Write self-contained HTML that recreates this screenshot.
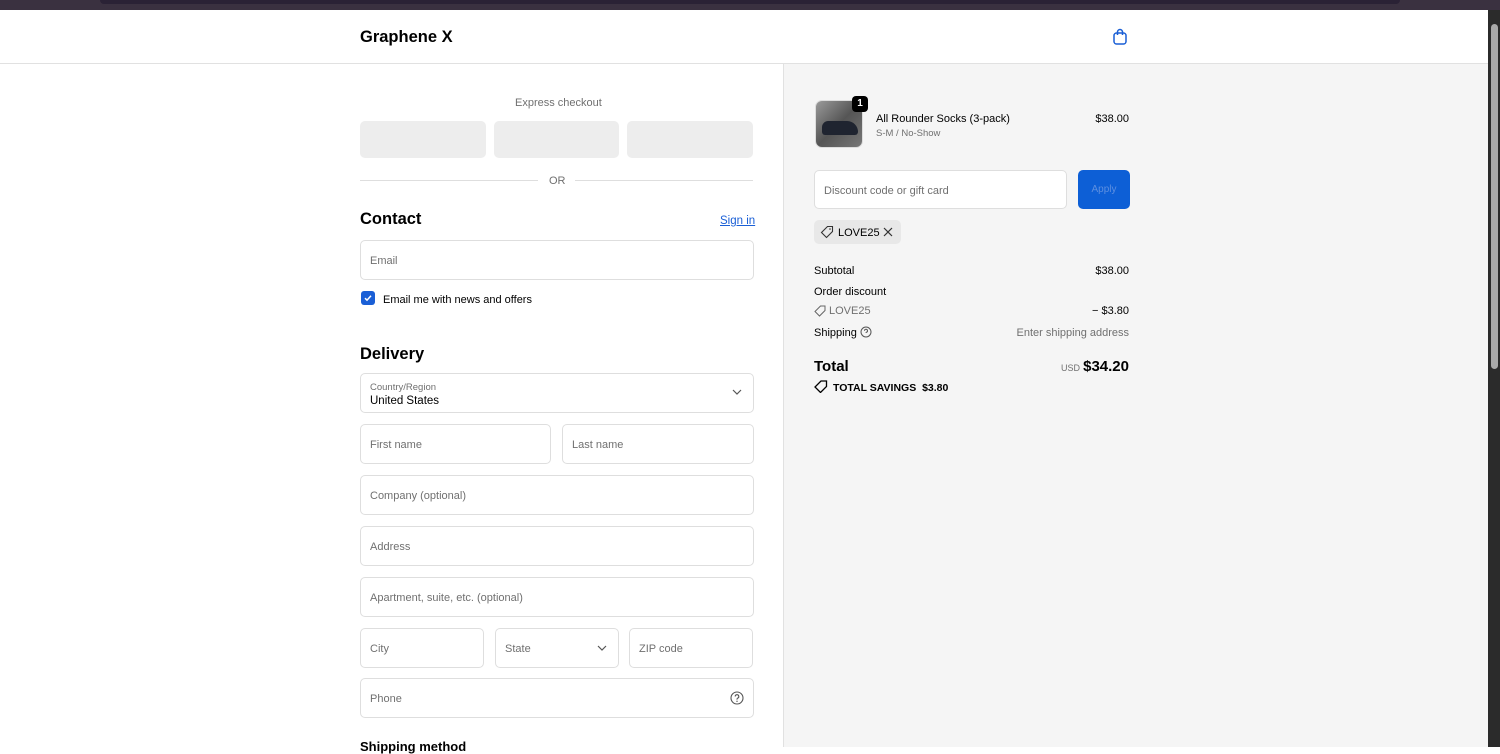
<!DOCTYPE html><html><head><style>
*{box-sizing:border-box;margin:0;padding:0}
body{width:1500px;height:747px;overflow:hidden;background:#fff;font-family:"Liberation Sans",sans-serif;color:#000;position:relative}
.a{position:absolute}
.in{position:absolute;border:1px solid #dedede;border-radius:5px;background:#fff;font-size:11px;color:#707070;padding-left:9px;padding-top:2px;display:flex;align-items:center}
.r{position:absolute;font-size:11px}
.rr{position:absolute;font-size:11px;right:371px;text-align:right;white-space:nowrap}
</style></head><body>
<div class="a" style="left:0;top:0;width:1500px;height:10px;background:#3a3140"></div>
<div class="a" style="left:100px;top:0;width:1300px;height:4px;background:#2a2235;border-radius:0 0 6px 6px"></div>
<div class="a" style="left:1488px;top:10px;width:12px;height:737px;background:#2b2b2b"></div>
<div class="a" style="left:1491px;top:24px;width:7px;height:345px;background:#a9a9a9;border-radius:4px"></div>
<div class="a" style="left:0;top:63px;width:1488px;height:1px;background:#e1e1e1"></div>
<div class="a" style="left:783px;top:64px;width:705px;height:683px;background:#f5f5f5;border-left:1px solid #e1e1e1"></div>
<div class="a" style="left:360px;top:28px;font-size:16.5px;font-weight:bold">Graphene X</div>
<svg class="a" style="left:1112px;top:28px" width="16" height="18" viewBox="0 0 16 18"><rect x="2" y="5" width="12" height="11" rx="2.5" fill="none" stroke="#1a5fd6" stroke-width="1.5"/><path d="M5.5 7V4a2.5 2.5 0 0 1 5 0v3" fill="none" stroke="#1a5fd6" stroke-width="1.5"/></svg>

<div class="r" style="left:515px;top:97px;color:#707070">Express checkout</div>
<div class="a" style="left:360px;top:121px;width:126px;height:37px;background:#ededed;border-radius:5px"></div>
<div class="a" style="left:494px;top:121px;width:125px;height:37px;background:#ededed;border-radius:5px"></div>
<div class="a" style="left:627px;top:121px;width:126px;height:37px;background:#ededed;border-radius:5px"></div>
<div class="a" style="left:360px;top:180px;width:178px;height:1px;background:#dedede"></div>
<div class="a" style="left:575px;top:180px;width:178px;height:1px;background:#dedede"></div>
<div class="r" style="left:549px;top:175px;color:#707070">OR</div>

<div class="a" style="left:360px;top:210px;font-size:16.5px;font-weight:bold">Contact</div>
<div class="r" style="left:720px;top:215px;color:#1a5fd6;text-decoration:underline;font-size:11.5px">Sign in</div>
<div class="in" style="left:360px;top:240px;width:394px;height:40px">Email</div>
<div class="a" style="left:361px;top:291px;width:14px;height:14px;background:#1a5fd6;border-radius:3px"></div>
<svg class="a" style="left:361px;top:291px" width="14" height="14"><path d="M4 7.2l2 2 4-4.4" fill="none" stroke="#fff" stroke-width="1.5"/></svg>
<div class="r" style="left:383px;top:294px;color:#000">Email me with news and offers</div>

<div class="a" style="left:360px;top:345px;font-size:16.5px;font-weight:bold">Delivery</div>
<div class="in" style="left:360px;top:373px;width:394px;height:40px;display:block;padding-top:8px"><div style="font-size:9.5px">Country/Region</div><div style="color:#000;font-size:11.5px;margin-top:2px">United States</div></div>
<svg class="a" style="left:732px;top:389px" width="10" height="7"><path d="M1 1l4 4 4-4" fill="none" stroke="#555" stroke-width="1.2"/></svg>
<div class="in" style="left:360px;top:424px;width:191px;height:40px">First name</div>
<div class="in" style="left:562px;top:424px;width:192px;height:40px">Last name</div>
<div class="in" style="left:360px;top:475px;width:394px;height:40px">Company (optional)</div>
<div class="in" style="left:360px;top:526px;width:394px;height:40px">Address</div>
<div class="in" style="left:360px;top:577px;width:394px;height:40px">Apartment, suite, etc. (optional)</div>
<div class="in" style="left:360px;top:628px;width:124px;height:40px">City</div>
<div class="in" style="left:495px;top:628px;width:124px;height:40px">State</div>
<svg class="a" style="left:597px;top:645px" width="10" height="7"><path d="M1 1l4 4 4-4" fill="none" stroke="#555" stroke-width="1.2"/></svg>
<div class="in" style="left:629px;top:628px;width:124px;height:40px">ZIP code</div>
<div class="in" style="left:360px;top:678px;width:394px;height:40px">Phone</div>
<svg class="a" style="left:730px;top:691px" width="14" height="14"><circle cx="7" cy="7" r="6" fill="none" stroke="#555" stroke-width="1.1"/><path d="M5.2 5.5a1.8 1.8 0 1 1 2.4 1.7c-.5.2-.6.5-.6 1v.4" fill="none" stroke="#555" stroke-width="1.1"/><circle cx="7" cy="10.3" r=".7" fill="#555"/></svg>
<div class="a" style="left:360px;top:739px;font-size:13px;font-weight:bold">Shipping method</div>

<div class="a" style="left:815px;top:100px;width:48px;height:48px;border-radius:7px;border:1px solid #ddd;background:linear-gradient(135deg,#9a9a9a,#555 50%,#777);overflow:hidden"><div style="position:absolute;left:6px;top:20px;width:36px;height:14px;background:#1f2430;border-radius:8px 14px 4px 4px"></div></div>
<div class="a" style="left:852px;top:96px;width:16px;height:16px;background:#000;border-radius:4px;color:#fff;font-size:10px;font-weight:bold;text-align:center;line-height:16px">1</div>
<div class="r" style="left:876px;top:113px">All Rounder Socks (3-pack)</div>
<div class="r" style="left:876px;top:128px;color:#707070;font-size:9.5px">S-M / No-Show</div>
<div class="rr" style="top:113px">$38.00</div>
<div class="in" style="left:814px;top:170px;width:253px;height:39px">Discount code or gift card</div>
<div class="a" style="left:1078px;top:170px;width:52px;height:39px;background:#0d5fd6;border-radius:5px;color:#5d8fe0;font-size:10px;text-align:center;line-height:40px">Apply</div>
<div class="a" style="left:814px;top:220px;width:87px;height:24px;background:#e8e8e8;border-radius:5px"></div>
<svg class="a" style="left:820px;top:225px" width="14" height="14"><path d="M7.5 1.5h5v5l-6 6-5-5z" fill="none" stroke="#333" stroke-width="1.1"/><circle cx="10" cy="4" r=".8" fill="#333"/></svg>
<div class="r" style="left:838px;top:227px">LOVE25</div>
<svg class="a" style="left:883px;top:227px" width="10" height="10"><path d="M1 1l8 8M9 1l-8 8" stroke="#333" stroke-width="1.2"/></svg>
<div class="r" style="left:814px;top:265px">Subtotal</div>
<div class="rr" style="top:265px">$38.00</div>
<div class="r" style="left:814px;top:286px">Order discount</div>
<svg class="a" style="left:814px;top:305px" width="12" height="12"><path d="M6.5 1h4.5v4.5l-5.5 5.5-4.5-4.5z" fill="none" stroke="#666" stroke-width="1"/></svg>
<div class="r" style="left:829px;top:305px;color:#707070">LOVE25</div>
<div class="rr" style="top:305px">− $3.80</div>
<div class="r" style="left:814px;top:327px">Shipping</div>
<svg class="a" style="left:860px;top:326px" width="12" height="12"><circle cx="6" cy="6" r="5" fill="none" stroke="#555"/><path d="M4.5 4.8a1.5 1.5 0 1 1 2 1.4c-.4.2-.5.4-.5.8" fill="none" stroke="#555"/></svg>
<div class="rr" style="top:327px;color:#707070">Enter shipping address</div>
<div class="a" style="left:814px;top:358px;font-size:15px;font-weight:bold">Total</div>
<div class="r" style="left:1061px;top:363px;color:#707070;font-size:9px">USD</div>
<div class="a" style="right:371px;top:358px;font-size:15px;font-weight:bold">$34.20</div>
<svg class="a" style="left:814px;top:380px" width="14" height="13"><path d="M7 1h5.5v5.5L6.5 12.5 1 7z" fill="none" stroke="#000" stroke-width="1.3"/></svg>
<div class="r" style="left:833px;top:382px;font-weight:bold;font-size:10.5px">TOTAL SAVINGS&nbsp; $3.80</div>
</body></html>
